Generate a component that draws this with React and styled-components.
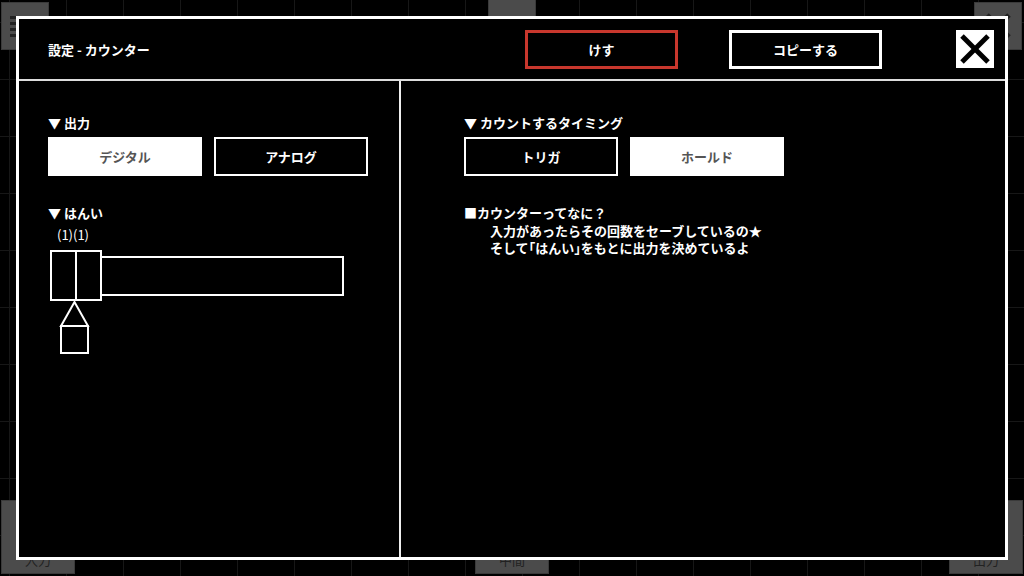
import React from "react";
import styled, { createGlobalStyle } from "styled-components";

const GlobalStyle = createGlobalStyle`
  html, body {
    margin: 0;
    padding: 0;
  }
  body {
    width: 1024px;
    height: 576px;
    overflow: hidden;
    background-color: #000;
    background-image:
      linear-gradient(to right, #171717 1px, transparent 1px),
      linear-gradient(to bottom, #171717 1px, transparent 1px);
    background-size: 57px 57px;
    background-position: 9px 22px;
    font-family: "Noto Sans CJK JP", "Noto Sans", sans-serif;
    color: #fff;
  }
`;

const Stage = styled.div`
  position: relative;
  width: 1024px;
  height: 576px;
  display: flex;
  flex-direction: column;
  justify-content: space-between;
`;

const ToolRow = styled.div`
  display: flex;
  justify-content: space-between;
  align-items: flex-start;
  padding: ${(p) => (p.bottom ? "0 1px 2px 1px" : "2px 2px 0 1px")};
`;

const ToolButton = styled.div`
  width: ${(p) => p.size}px;
  height: ${(p) => p.size}px;
  background: #4b4b4b;
  border: 1px solid #3a3a3a;
  box-sizing: border-box;
  display: flex;
  align-items: ${(p) => (p.label ? "flex-end" : "center")};
  justify-content: center;
  color: #222;
  font-size: 13px;
  padding-bottom: ${(p) => (p.label ? "4px" : "0")};
  margin-top: ${(p) => (p.peek ? "-32px" : "0")};
`;

const Dialog = styled.section`
  position: absolute;
  left: 16px;
  top: 16px;
  width: 992px;
  height: 544px;
  box-sizing: border-box;
  border: 3px solid #fff;
  background: #000;
  display: flex;
  flex-direction: column;
`;

const Header = styled.header`
  height: 60px;
  border-bottom: 2px solid #ddd;
  display: flex;
  align-items: center;
  padding: 0 11px 0 29px;
`;

const Title = styled.h1`
  flex: 1;
  margin: 0;
  font-size: 13px;
  font-weight: 700;
`;

const HeadButton = styled.button`
  width: 153px;
  height: 39px;
  margin-right: ${(p) => p.gap}px;
  background: #000;
  color: #fff;
  border: 3px solid ${(p) => (p.danger ? "#c8372d" : "#fff")};
  font-family: inherit;
  font-size: 13px;
  font-weight: 700;
  padding: 0;
  cursor: pointer;
`;

const CloseButton = styled.button`
  width: 38px;
  height: 38px;
  background: #fff;
  border: none;
  padding: 0;
  display: flex;
  align-items: center;
  justify-content: center;
`;

const Body = styled.div`
  flex: 1;
  display: flex;
`;

const Column = styled.div`
  width: ${(p) => (p.side ? "382px" : "auto")};
  flex: ${(p) => (p.side ? "none" : "1")};
  border-right: ${(p) => (p.side ? "2px solid #eee" : "none")};
  padding: 33px 0 0 ${(p) => (p.side ? "29px" : "63px")};
  box-sizing: border-box;
`;

const Heading = styled.h2`
  margin: ${(p) => (p.first ? "0" : "28px")} 0 5px 0;
  font-size: 13px;
  font-weight: 700;
  line-height: 18px;
`;

const Choices = styled.div`
  display: flex;
  gap: 12px;
`;

const Choice = styled.button`
  width: 154px;
  height: 39px;
  box-sizing: border-box;
  padding: 0;
  font-family: inherit;
  font-size: 13px;
  font-weight: 700;
  background: ${(p) => (p.active ? "#fff" : "#000")};
  color: ${(p) => (p.active ? "#555" : "#fff")};
  border: 2px solid #fff;
`;

const RangeLabel = styled.div`
  font-size: 13px;
  line-height: 16px;
  padding-left: 9px;
  margin-top: 2px;
  font-weight: 400;
`;

const Diagram = styled.svg`
  display: block;
  margin-top: 6px;
`;

const Note = styled.div`
  margin-top: 28px;
  font-size: 13px;
  font-weight: 700;
  line-height: 18px;
`;

const NoteLine = styled.div`
  padding-left: 26px;
  line-height: 17px;
`;

const Bracket = styled.span`
  font-feature-settings: "halt";
`;

function RangeDiagram() {
  return (
    <Diagram width="300" height="108" viewBox="0 0 300 108">
      <g fill="none" stroke="#fff" strokeWidth="2">
        <rect x="3" y="2" width="25" height="49" />
        <rect x="28" y="2" width="25" height="49" />
        <rect x="53" y="8" width="242" height="38" />
        <polygon points="26.5,53 13,77 40,77" />
        <rect x="13" y="77" width="27" height="27" />
      </g>
    </Diagram>
  );
}

export default function App() {
  return (
    <>
      <GlobalStyle />
      <Stage>
        <ToolRow>
          <ToolButton size={48}>
            <svg width="30" height="24" viewBox="0 0 30 24">
              <g fill="#222">
                <rect x="0" y="2" width="30" height="3" />
                <rect x="0" y="8" width="30" height="3" />
                <rect x="0" y="14" width="30" height="3" />
                <rect x="0" y="20" width="30" height="3" />
              </g>
            </svg>
          </ToolButton>
          <ToolButton size={48} peek />
          <ToolButton size={48}>
            <svg width="34" height="34" viewBox="0 0 34 34">
              <g stroke="#222" strokeWidth="5">
                <line x1="6" y1="6" x2="28" y2="28" />
                <line x1="28" y1="6" x2="6" y2="28" />
              </g>
            </svg>
          </ToolButton>
        </ToolRow>
        <ToolRow bottom>
          <ToolButton size={74} label>入力</ToolButton>
          <ToolButton size={74} label>中間</ToolButton>
          <ToolButton size={74} label>出力</ToolButton>
        </ToolRow>

        <Dialog>
          <Header>
            <Title>設定 - カウンター</Title>
            <HeadButton danger gap={51}>けす</HeadButton>
            <HeadButton gap={74}>コピーする</HeadButton>
            <CloseButton aria-label="close">
              <svg width="32" height="32" viewBox="0 0 32 32">
                <g stroke="#000" strokeWidth="5">
                  <line x1="3" y1="3" x2="29" y2="29" />
                  <line x1="29" y1="3" x2="3" y2="29" />
                </g>
              </svg>
            </CloseButton>
          </Header>
          <Body>
            <Column side>
              <Heading first>▼ 出力</Heading>
              <Choices>
                <Choice active>デジタル</Choice>
                <Choice>アナログ</Choice>
              </Choices>
              <Heading>▼ はんい</Heading>
              <RangeLabel>(1)(1)</RangeLabel>
              <RangeDiagram />
            </Column>
            <Column>
              <Heading first>▼ カウントするタイミング</Heading>
              <Choices>
                <Choice>トリガ</Choice>
                <Choice active>ホールド</Choice>
              </Choices>
              <Note>
                <div>■カウンターってなに？</div>
                <NoteLine>入力があったらその回数をセーブしているの★</NoteLine>
                <NoteLine>
                  そして<Bracket>「</Bracket>はんい<Bracket>」</Bracket>をもとに出力を決めているよ
                </NoteLine>
              </Note>
            </Column>
          </Body>
        </Dialog>
      </Stage>
    </>
  );
}
